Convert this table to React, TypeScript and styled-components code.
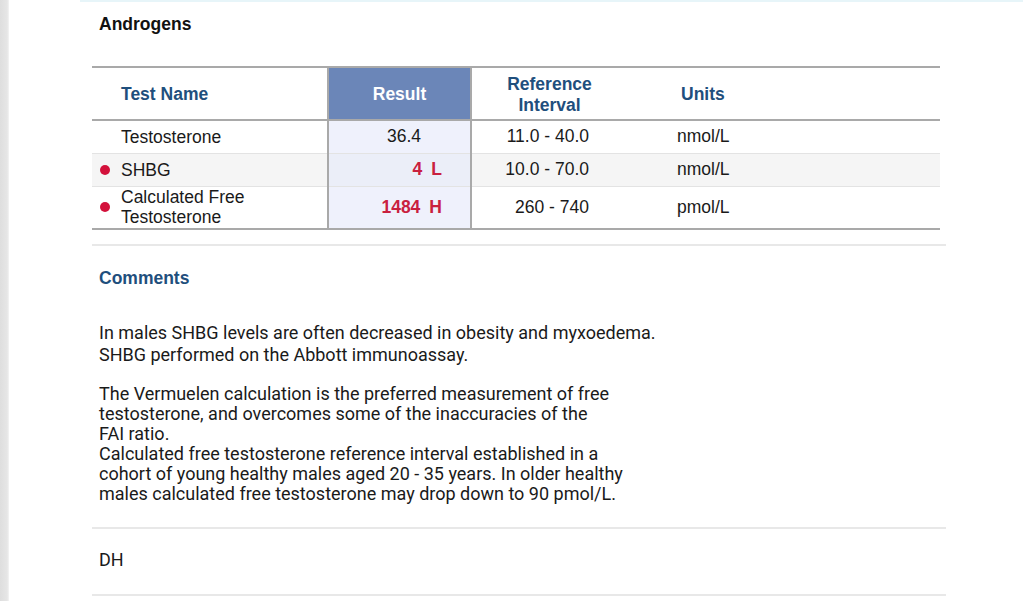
import React from "react";
import styled, { createGlobalStyle } from "styled-components";

const GlobalStyle = createGlobalStyle`
  html, body { margin: 0; padding: 0; background: #ffffff; }
  body { font-family: "Liberation Sans", Arial, sans-serif; color: #1a1a1a; }
`;

const Page = styled.div`
  display: flex;
  width: 1023px;
  height: 601px;
  overflow: hidden;
`;

const Strip = styled.div`
  width: 9px;
  flex: none;
  background: linear-gradient(to right, #dedede, #e6e6e6 80%, #f4f4f4);
`;

const Main = styled.div`
  flex: 1;
  margin-left: 71px;
  border-top: 2px solid #e7f5f9;
  display: flex;
  flex-direction: column;
`;

const Title = styled.h2`
  margin: 11px 0 0 19px;
  font-size: 17.5px;
  line-height: 22px;
  font-weight: 700;
  color: #111111;
`;

const Table = styled.table`
  margin: 31px 0 0 12px;
  width: 848px;
  border-collapse: collapse;
  table-layout: fixed;
  font-size: 17.5px;
  border-top: 2px solid #a9a9a9;
  border-bottom: 2px solid #a9a9a9;
`;

const HeadRow = styled.tr`
  height: 53px;
  border-bottom: 2px solid #a9a9a9;
`;

const Th = styled.th<{ $align?: string; $pl?: number; $result?: boolean }>`
  padding: 2px 0 0 ${(p) => p.$pl ?? 0}px;
  text-align: ${(p) => p.$align ?? "left"};
  font-weight: 700;
  line-height: 21px;
  color: ${(p) => (p.$result ? "#ffffff" : "#1f4f7d")};
  background: ${(p) => (p.$result ? "#6b86b8" : "transparent")};
  ${(p) => (p.$result ? "border-left: 2px solid #a9a9a9; border-right: 2px solid #a9a9a9;" : "")}
`;

const Row = styled.tr<{ $alt?: boolean; $h: number }>`
  height: ${(p) => p.$h}px;
  background: ${(p) => (p.$alt ? "#f5f5f5" : "#ffffff")};
  border-bottom: 1px solid #e3e3e3;
  &:last-child { border-bottom: none; }
`;

const NameCell = styled.td`
  padding: 0 0 0 8px;
  line-height: 20px;
`;

const NameWrap = styled.div`
  display: flex;
  align-items: center;
  gap: 11px;
`;

const Dot = styled.span<{ $on?: boolean }>`
  width: 10px;
  height: 10px;
  flex: none;
  border-radius: 50%;
  background: ${(p) => (p.$on ? "#d3113b" : "transparent")};
`;

const ResultCell = styled.td<{ $flagged?: boolean; $alt?: boolean }>`
  border-left: 2px solid #a9a9a9;
  border-right: 2px solid #a9a9a9;
  background: ${(p) => (p.$alt ? "#ebeef8" : "#eff1fc")};
  text-align: right;
  padding: 0 ${(p) => (p.$flagged ? 28 : 49)}px 0 0;
  font-weight: ${(p) => (p.$flagged ? 700 : 400)};
  color: ${(p) => (p.$flagged ? "#c9203f" : "#1a1a1a")};
`;

const Flag = styled.span`
  margin-left: 9px;
`;

const RefCell = styled.td`
  text-align: right;
  padding: 0 38px 0 0;
`;

const UnitCell = styled.td`
  padding: 0 0 0 50px;
`;

const Rule = styled.div<{ $mt: number }>`
  margin: ${(p) => p.$mt}px 0 0 12px;
  width: 854px;
  height: 2px;
  background: #e8e8e8;
`;

const SectionTitle = styled.h3`
  margin: 21px 0 0 19px;
  font-size: 17.5px;
  line-height: 22px;
  font-weight: 700;
  color: #1f4f7d;
`;

const Para = styled.p<{ $mt: number; $lh: number }>`
  margin: ${(p) => p.$mt}px 0 0 19px;
  font-family: Roboto, "Liberation Sans", sans-serif;
  font-size: 18px;
  line-height: ${(p) => p.$lh}px;
  color: #1a1a1a;
`;

const Initials = styled.div`
  margin: 20px 0 0 19px;
  font-family: Roboto, "Liberation Sans", sans-serif;
  font-size: 18px;
  line-height: 22px;
  color: #1a1a1a;
`;

type Result = {
  name: React.ReactNode;
  value: string;
  flag?: string;
  ref: string;
  unit: string;
  h: number;
};

const rows: Result[] = [
  { name: "Testosterone", value: "36.4", ref: "11.0 - 40.0", unit: "nmol/L", h: 33 },
  { name: "SHBG", value: "4", flag: "L", ref: "10.0 - 70.0", unit: "nmol/L", h: 33 },
  {
    name: (
      <>
        Calculated Free
        <br />
        Testosterone
      </>
    ),
    value: "1484",
    flag: "H",
    ref: "260 - 740",
    unit: "pmol/L",
    h: 43,
  },
];

export default function App() {
  return (
    <Page>
      <GlobalStyle />
      <Strip />
      <Main>
        <Title>Androgens</Title>
        <Table>
          <colgroup>
            <col style={{ width: 236 }} />
            <col style={{ width: 143 }} />
            <col style={{ width: 156 }} />
            <col style={{ width: 313 }} />
          </colgroup>
          <thead>
            <HeadRow>
              <Th $pl={29}>Test Name</Th>
              <Th $align="center" $result>
                Result
              </Th>
              <Th $align="center">
                Reference
                <br />
                Interval
              </Th>
              <Th $pl={54}>Units</Th>
            </HeadRow>
          </thead>
          <tbody>
            {rows.map((r, i) => (
              <Row key={i} $alt={i === 1} $h={r.h}>
                <NameCell>
                  <NameWrap>
                    <Dot $on={!!r.flag} />
                    <span>{r.name}</span>
                  </NameWrap>
                </NameCell>
                <ResultCell $flagged={!!r.flag} $alt={i === 1}>
                  {r.value}
                  {r.flag && <Flag>{r.flag}</Flag>}
                </ResultCell>
                <RefCell>{r.ref}</RefCell>
                <UnitCell>{r.unit}</UnitCell>
              </Row>
            ))}
          </tbody>
        </Table>
        <Rule $mt={14} />
        <SectionTitle>Comments</SectionTitle>
        <Para $mt={33} $lh={22}>
          In males SHBG levels are often decreased in obesity and myxoedema.
          <br />
          SHBG performed on the Abbott immunoassay.
        </Para>
        <Para $mt={18} $lh={20}>
          The Vermuelen calculation is the preferred measurement of free
          <br />
          testosterone, and overcomes some of the inaccuracies of the
          <br />
          FAI ratio.
          <br />
          Calculated free testosterone reference interval established in a
          <br />
          cohort of young healthy males aged 20 - 35 years. In older healthy
          <br />
          males calculated free testosterone may drop down to 90 pmol/L.
        </Para>
        <Rule $mt={23} />
        <Initials>DH</Initials>
        <Rule $mt={23} />
      </Main>
    </Page>
  );
}
